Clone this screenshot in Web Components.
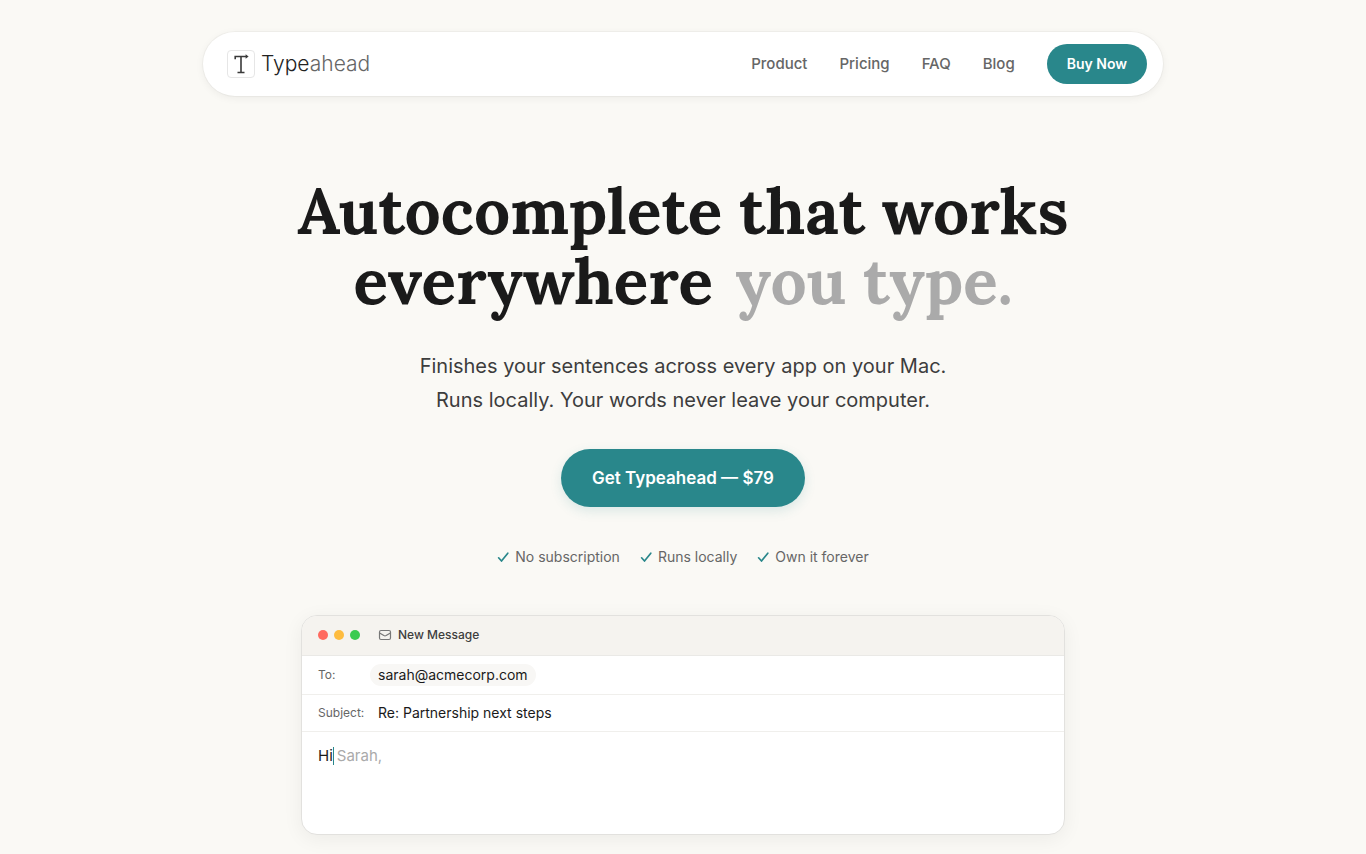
<!DOCTYPE html>
<html lang="en">
<head>
<meta charset="utf-8">
<meta name="viewport" content="width=device-width, initial-scale=1">
<title>Typeahead</title>
<style>
  :root {
    --paper: #faf9f5;
    --ink: #1a1a1a;
    --muted: #666;
    --ghost: #aaa;
    --teal: #29878b;
  }
  body {
    margin: 0;
    background: var(--paper);
    color: var(--ink);
    font-family: Inter, "Liberation Sans", sans-serif;
  }
</style>
</head>
<body>
<ta-page>
  <ta-nav slot="nav">
    <ta-nav-link href="#product">Product</ta-nav-link>
    <ta-nav-link href="#pricing">Pricing</ta-nav-link>
    <ta-nav-link href="#faq">FAQ</ta-nav-link>
    <ta-nav-link href="#blog">Blog</ta-nav-link>
    <ta-button slot="action">Buy Now</ta-button>
  </ta-nav>
  <ta-hero>
    <span slot="title">Autocomplete that works<br>everywhere</span>
    <span slot="ghost">you type.</span>
    <span slot="lead">Finishes your sentences across every app on your Mac.<br>Runs locally. Your words never leave your computer.</span>
    <ta-button slot="action" size="large">Get Typeahead — $79</ta-button>
    <ta-check slot="points">No subscription</ta-check>
    <ta-check slot="points">Runs locally</ta-check>
    <ta-check slot="points">Own it forever</ta-check>
  </ta-hero>
  <ta-mail></ta-mail>
</ta-page>

<script>
const define = (name, html, setup) => customElements.define(name, class extends HTMLElement {
  constructor() {
    super();
    this.attachShadow({ mode: "open" }).innerHTML = html;
    if (setup) setup(this, this.shadowRoot);
  }
});

define("ta-page", `
  <style>
    :host { display: block; padding: 32px 24px 20px; }
    header, main { display: flex; flex-direction: column; align-items: center; }
  </style>
  <header><slot name="nav"></slot></header>
  <main><slot></slot></main>`);

define("ta-logo", `
  <style>
    :host { display: block; }
    a { display: flex; align-items: center; gap: 6px; color: #222; text-decoration: none; font-size: 21px; line-height: 28px; font-weight: 300; }
    .mark { box-sizing: border-box; width: 28px; height: 28px; border: 1px solid #e6e6e6; border-radius: 4px; background: #fff; }
    svg { display: block; }
    .rest { color: #666; }
  </style>
  <a href="#" aria-label="Typeahead">
    <span class="mark"><svg width="26" height="26" viewBox="0 0 26 26" fill="none" stroke="#3a3a3a">
      <path d="M7.200 8.200V5.500H18.500" stroke-width="1.6"/>
      <path d="M13 5.500V21.500M9.500 21.500h7" stroke-width="1.6"/>
      <path d="M17.600 3.300l3 2.200-3 2.200z" fill="#3a3a3a" stroke="none"/>
    </svg></span>
    <span>Type<span class="rest">ahead</span></span>
  </a>`);

define("ta-nav-link", `
  <style>
    :host { display: block; }
    a { color: var(--muted); text-decoration: none; font-size: 15px; line-height: 24px; font-weight: 500; }
  </style>
  <a><slot></slot></a>`,
  (el, root) => { root.querySelector("a").href = el.getAttribute("href") || "#"; });

define("ta-button", `
  <style>
    :host { display: block; }
    button {
      display: block; height: 40px; padding: 0 20px; border: 0; border-radius: 20px;
      background: var(--teal); color: #fff; font: 600 14px/20px Inter, "Liberation Sans", sans-serif; cursor: pointer;
    }
    :host([size="large"]) button {
      height: 58px; padding: 0 31px; border-radius: 29px; font-size: 17px; line-height: 24px;
      box-shadow: 0 4px 12px rgba(41, 135, 139, .15);
    }
  </style>
  <button type="button"><slot></slot></button>`);

define("ta-nav", `
  <style>
    :host { display: block; width: 100%; max-width: 960px; }
    nav {
      display: flex; align-items: center; justify-content: space-between; box-sizing: border-box;
      min-height: 64px; padding: 0 16px 0 24px; border-radius: 32px; background: #fff;
      box-shadow: 0 0 0 1px rgba(0, 0, 0, .03), 0 2px 8px rgba(0, 0, 0, .06);
    }
    .links { display: flex; align-items: center; gap: 32px; }
  </style>
  <nav aria-label="Main">
    <ta-logo></ta-logo>
    <div class="links"><slot></slot><slot name="action"></slot></div>
  </nav>`);

define("ta-hero", `
  <style>
    :host { display: flex; flex-direction: column; align-items: center; padding: 80px 0 48px; text-align: center; }
    h1 { margin: 0; font: 700 64px/1.1 Lora, "Liberation Serif", serif; }
    .ghost { margin-left: 6px; color: var(--ghost); }
    p { margin: 32px 0; color: #3d3d3d; font-size: 20px; line-height: 34px; }
    .points { display: flex; flex-wrap: wrap; justify-content: center; gap: 20px; margin-top: 40px; }
  </style>
  <h1><slot name="title"></slot> <span class="ghost"><slot name="ghost"></slot></span></h1>
  <p><slot name="lead"></slot></p>
  <slot name="action"></slot>
  <div class="points"><slot name="points"></slot></div>`);

define("ta-check", `
  <style>
    :host { display: flex; align-items: center; gap: 6px; color: var(--muted); font-size: 14px; line-height: 20px; }
  </style>
  <svg width="12" height="12" viewBox="0 0 12 12" fill="none" stroke="#29878b" stroke-width="1.7" stroke-linecap="round" stroke-linejoin="round" aria-hidden="true"><path d="M1.600 6.800l2.900 3.200L10.800 2.200"/></svg>
  <span><slot></slot></span>`);

define("ta-mail", `
  <style>
    :host { display: block; width: 100%; max-width: 764px; }
    section {
      box-sizing: border-box; overflow: hidden; border: 1px solid #e2e1de; border-radius: 16px; background: #fff;
      box-shadow: 0 4px 20px rgba(0, 0, 0, .06);
    }
    header { display: flex; align-items: center; padding: 0 16px; height: 39px; background: #f5f3ef; border-bottom: 1px solid #eae9e6; }
    .lights { display: flex; gap: 6px; margin-right: 18px; }
    .lights i { width: 10px; height: 10px; border-radius: 50%; background: #ff6a5f; }
    .lights i:nth-child(2) { background: #febc3f; }
    .lights i:nth-child(3) { background: #39cb4f; }
    h2 { display: flex; align-items: center; gap: 6px; margin: 0; color: #3d3d3d; font-size: 12px; line-height: 16px; font-weight: 500; }
    .row { display: flex; align-items: center; height: 38px; padding: 0 16px; border-bottom: 1px solid #f0efec; }
    .row.subject { height: 36px; }
    label { width: 52px; color: var(--muted); font-size: 12px; line-height: 20px; }
    input {
      box-sizing: border-box; height: 22px; margin: 0; padding: 0 8px; border: 0; background: none;
      color: var(--ink); font: 400 14px/20px Inter, "Liberation Sans", sans-serif; outline: 0;
    }
    #to { width: 166px; border-radius: 11px; background: #f8f7f5; }
    #subject { flex: 1; }
    .body { display: flex; align-items: center; height: 20px; padding: 14px 16px 68px; font-size: 15px; line-height: 20px; }
    .caret { width: 1px; height: 18px; margin-right: 3px; background: var(--teal); }
    .ghost { color: var(--ghost); }
  </style>
  <section aria-label="New Message">
    <header>
      <span class="lights"><i></i><i></i><i></i></span>
      <h2><svg width="14" height="14" viewBox="0 0 14 14" fill="none" stroke="#777" stroke-width="1.2" stroke-linejoin="round" stroke-linecap="round" aria-hidden="true"><rect x="1.500" y="2.500" width="11" height="9" rx="1.500"/><path d="M2 5.200l3.900 2.300q1.100.6 2.200 0L12 5.200"/></svg>New Message</h2>
    </header>
    <div class="row"><label for="to">To:</label><input id="to" type="text" value="sarah@acmecorp.com"></div>
    <div class="row subject"><label for="subject">Subject:</label><input id="subject" type="text" value="Re: Partnership next steps"></div>
    <div class="body"><span>Hi</span><span class="caret"></span><span class="ghost">Sarah,</span></div>
  </section>`);
</script>
</body>
</html>
